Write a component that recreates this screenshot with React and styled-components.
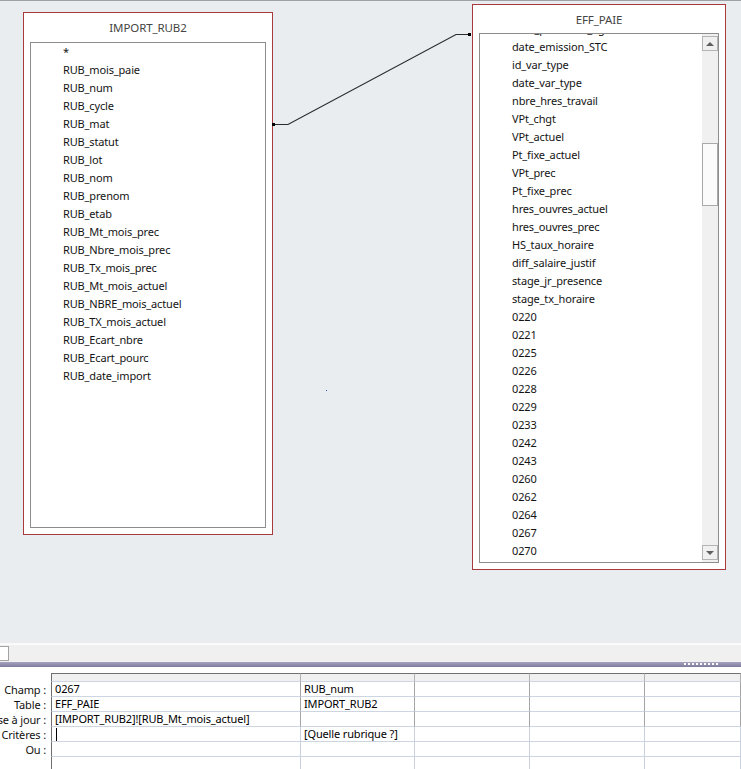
import React from 'react';
import styled, { createGlobalStyle } from 'styled-components';

const GlobalStyle = createGlobalStyle`
  html, body {
    margin: 0;
    padding: 0;
    background: #ffffff;
    overflow: hidden;
  }
  body {
    font-family: "Noto Sans", "Open Sans", sans-serif;
    font-size: 11px;
    letter-spacing: -0.15px;
    color: #111;
  }
`;

const leftFields = [
  '*',
  'RUB_mois_paie',
  'RUB_num',
  'RUB_cycle',
  'RUB_mat',
  'RUB_statut',
  'RUB_lot',
  'RUB_nom',
  'RUB_prenom',
  'RUB_etab',
  'RUB_Mt_mois_prec',
  'RUB_Nbre_mois_prec',
  'RUB_Tx_mois_prec',
  'RUB_Mt_mois_actuel',
  'RUB_NBRE_mois_actuel',
  'RUB_TX_mois_actuel',
  'RUB_Ecart_nbre',
  'RUB_Ecart_pourc',
  'RUB_date_import',
];

const rightFields = [
  'date_paiement_ag',
  'date_emission_STC',
  'id_var_type',
  'date_var_type',
  'nbre_hres_travail',
  'VPt_chgt',
  'VPt_actuel',
  'Pt_fixe_actuel',
  'VPt_prec',
  'Pt_fixe_prec',
  'hres_ouvres_actuel',
  'hres_ouvres_prec',
  'HS_taux_horaire',
  'diff_salaire_justif',
  'stage_jr_presence',
  'stage_tx_horaire',
  '0220',
  '0221',
  '0225',
  '0226',
  '0228',
  '0229',
  '0233',
  '0242',
  '0243',
  '0260',
  '0262',
  '0264',
  '0267',
  '0270',
];

const gridRows = [
  { label: 'Champ :', cells: ['0267', 'RUB_num'], dark: true },
  { label: 'Table :', cells: ['EFF_PAIE', 'IMPORT_RUB2'], dark: true },
  { label: 'Mise à jour :', cells: ['[IMPORT_RUB2]![RUB_Mt_mois_actuel]', ''], dark: true },
  { label: 'Critères :', cells: ['', '[Quelle rubrique ?]'], cursor: true },
  { label: 'Ou :', cells: ['', ''] },
  { label: '', cells: ['', ''] },
];

const colWidths = [250, 114, 115, 115];

const TableBox = ({ title, fields, x, y, w, h, titleH, offset, scroll }) => (
  <TableWindow $x={x} $y={y} $w={w} $h={h}>
    <TableTitle $h={titleH}>{title}</TableTitle>
    <FieldList>
      <Fields style={{ marginTop: -offset }}>
        {fields.map((f, i) => (
          <Field key={title + i}>{f}</Field>
        ))}
      </Fields>
      {scroll && (
        <ScrollBar>
          <ScrollButton>
            <Arrow $up />
          </ScrollButton>
          <Track>
            <Thumb />
          </Track>
          <ScrollButton>
            <Arrow />
          </ScrollButton>
        </ScrollBar>
      )}
    </FieldList>
  </TableWindow>
);

const App = () => {
  return (
    <Page>
      <GlobalStyle />
      <TopEdge />
      <Canvas>
        <TableBox
          title='IMPORT_RUB2'
          fields={leftFields}
          x={23}
          y={11}
          w={250}
          h={523}
          titleH={29}
          offset={0}
        />
        <TableBox
          title='EFF_PAIE'
          fields={rightFields}
          x={472}
          y={3}
          w={254}
          h={566}
          titleH={28}
          offset={14}
          scroll
        />
        <Connector width='741' height='642' viewBox='0 0 741 642'>
          <polyline
            points='273,123.5 288,123.5 456,33.5 471,33.5'
            fill='none'
            stroke='#2a2a2a'
            strokeWidth='1.2'
          />
          <rect x='272' y='122' width='3' height='3' fill='#000' />
          <rect x='468' y='32' width='3' height='3' fill='#000' />
        </Connector>
        <Speck />
      </Canvas>
      <Divider />
      <SplitStrip>
        <StripBox />
      </SplitStrip>
      <SplitBar>
        <Grip />
      </SplitBar>
      <GridArea>
        <GridRow $header>
          <RowLabel />
          {colWidths.map((w, i) => (
            <Cell key={'h' + i} $w={w} $first={i === 0} $dark $header />
          ))}
          <Cell $dark $header />
        </GridRow>
        {gridRows.map((row, r) => (
          <GridRow key={'r' + r}>
            <RowLabel>
              <span>{row.label}</span>
            </RowLabel>
            {colWidths.map((w, i) => (
              <Cell key={'c' + r + i} $w={w} $first={i === 0} $dark={row.dark}>
                {i === 0 && row.cursor && <Caret />}
                {row.cells[i] || ''}
              </Cell>
            ))}
            <Cell $dark={row.dark} />
          </GridRow>
        ))}
      </GridArea>
    </Page>
  );
};

export default App;

const Page = styled.div`
  width: 741px;
  height: 769px;
  overflow: hidden;
  display: flex;
  flex-direction: column;
  background: #fff;
`;

const TopEdge = styled.div`
  height: 1px;
  background: #9da1a6;
  flex: none;
`;

const Canvas = styled.div`
  position: relative;
  height: 642px;
  flex: none;
  background: #e9edf0;
`;

const TableWindow = styled.div`
  position: absolute;
  left: ${({ $x }) => $x}px;
  top: ${({ $y }) => $y}px;
  width: ${({ $w }) => $w}px;
  height: ${({ $h }) => $h}px;
  box-sizing: border-box;
  border: 1px solid #a8393d;
  background: #fff;
  padding: 0 6px 6px 6px;
  display: flex;
  flex-direction: column;
`;

const TableTitle = styled.div`
  height: ${({ $h }) => $h}px;
  flex: none;
  display: flex;
  align-items: center;
  justify-content: center;
  font-size: 11.5px;
  letter-spacing: -0.1px;
  color: #454545;
`;

const FieldList = styled.div`
  flex: 1;
  border: 1px solid #8d8d8d;
  overflow: hidden;
  display: flex;
  min-height: 0;
`;

const Fields = styled.div`
  flex: 1;
  padding-left: 32px;
`;

const Field = styled.div`
  height: 18px;
  line-height: 18px;
  white-space: nowrap;
  color: #141414;
`;

const ScrollBar = styled.div`
  width: 16px;
  flex: none;
  background: #f0f0f0;
  display: flex;
  flex-direction: column;
  padding: 2px 0;
  box-sizing: border-box;
`;

const ScrollButton = styled.div`
  height: 15px;
  box-sizing: border-box;
  border: 1px solid #b4b4b4;
  display: flex;
  align-items: center;
  justify-content: center;
  flex: none;
`;

const Arrow = styled.div`
  width: 0;
  height: 0;
  border-left: 4px solid transparent;
  border-right: 4px solid transparent;
  ${({ $up }) =>
    $up ? 'border-bottom: 4px solid #5f5f5f;' : 'border-top: 4px solid #5f5f5f;'}
`;

const Track = styled.div`
  flex: 1;
`;

const Thumb = styled.div`
  margin-top: 92px;
  height: 63px;
  box-sizing: border-box;
  border: 1px solid #a9a9a9;
  background: #fbfbfb;
`;

const Connector = styled.svg`
  position: absolute;
  left: 0;
  top: 0;
  pointer-events: none;
`;

const Speck = styled.span`
  position: absolute;
  left: 326px;
  top: 389px;
  width: 1px;
  height: 1px;
  background: #3a55c8;
`;

const Divider = styled.div`
  height: 2px;
  flex: none;
  background: #fbfbfb;
`;

const SplitStrip = styled.div`
  height: 17px;
  flex: none;
  background: #f0f0f0;
  display: flex;
  align-items: center;
`;

const StripBox = styled.div`
  margin-left: -1px;
  width: 10px;
  height: 15px;
  box-sizing: border-box;
  border: 1px solid #a3a3a3;
  background: #fff;
`;

const SplitBar = styled.div`
  height: 5px;
  flex: none;
  background: linear-gradient(#a6a3c1, #7e7b9c);
  position: relative;
`;

const Grip = styled.div`
  position: absolute;
  left: 684px;
  top: 1px;
  width: 35px;
  height: 2px;
  background: repeating-linear-gradient(
    90deg,
    #ffffff 0 2px,
    transparent 2px 4px
  );
`;

const GridArea = styled.div`
  flex: 1;
  padding-top: 6px;
  display: flex;
  flex-direction: column;
`;

const GridRow = styled.div`
  display: flex;
  flex: none;
  height: ${({ $header }) => ($header ? 9 : 15)}px;
`;

const RowLabel = styled.div`
  width: 51px;
  flex: none;
  display: flex;
  justify-content: flex-end;
  align-items: center;
  padding-right: 5px;
  box-sizing: border-box;
  overflow: hidden;
  white-space: nowrap;
  color: #111;

  span {
    flex: none;
  }
`;

const Cell = styled.div`
  position: relative;
  box-sizing: border-box;
  ${({ $w }) => ($w ? `width: ${$w}px; flex: none;` : 'flex: 1;')}
  border-right: 1px solid ${({ $dark }) => ($dark ? '#a5a5a5' : '#c8d2e0')};
  border-left: ${({ $first }) => ($first ? '1px solid #6f6f6f' : 'none')};
  border-bottom: 1px solid #cdd5e2;
  border-top: ${({ $header }) => ($header ? '1px solid #707070' : 'none')};
  background: ${({ $header }) => ($header ? '#f0f0f0' : '#fff')};
  padding-left: 3px;
  line-height: 14px;
  white-space: nowrap;
  overflow: hidden;
  color: #000;
  ${({ $header }) => ($header ? 'border-right-color: #b0b0b0;' : '')}
`;

const Caret = styled.span`
  position: absolute;
  left: 4px;
  top: 1px;
  width: 1px;
  height: 13px;
  background: #000;
`;
